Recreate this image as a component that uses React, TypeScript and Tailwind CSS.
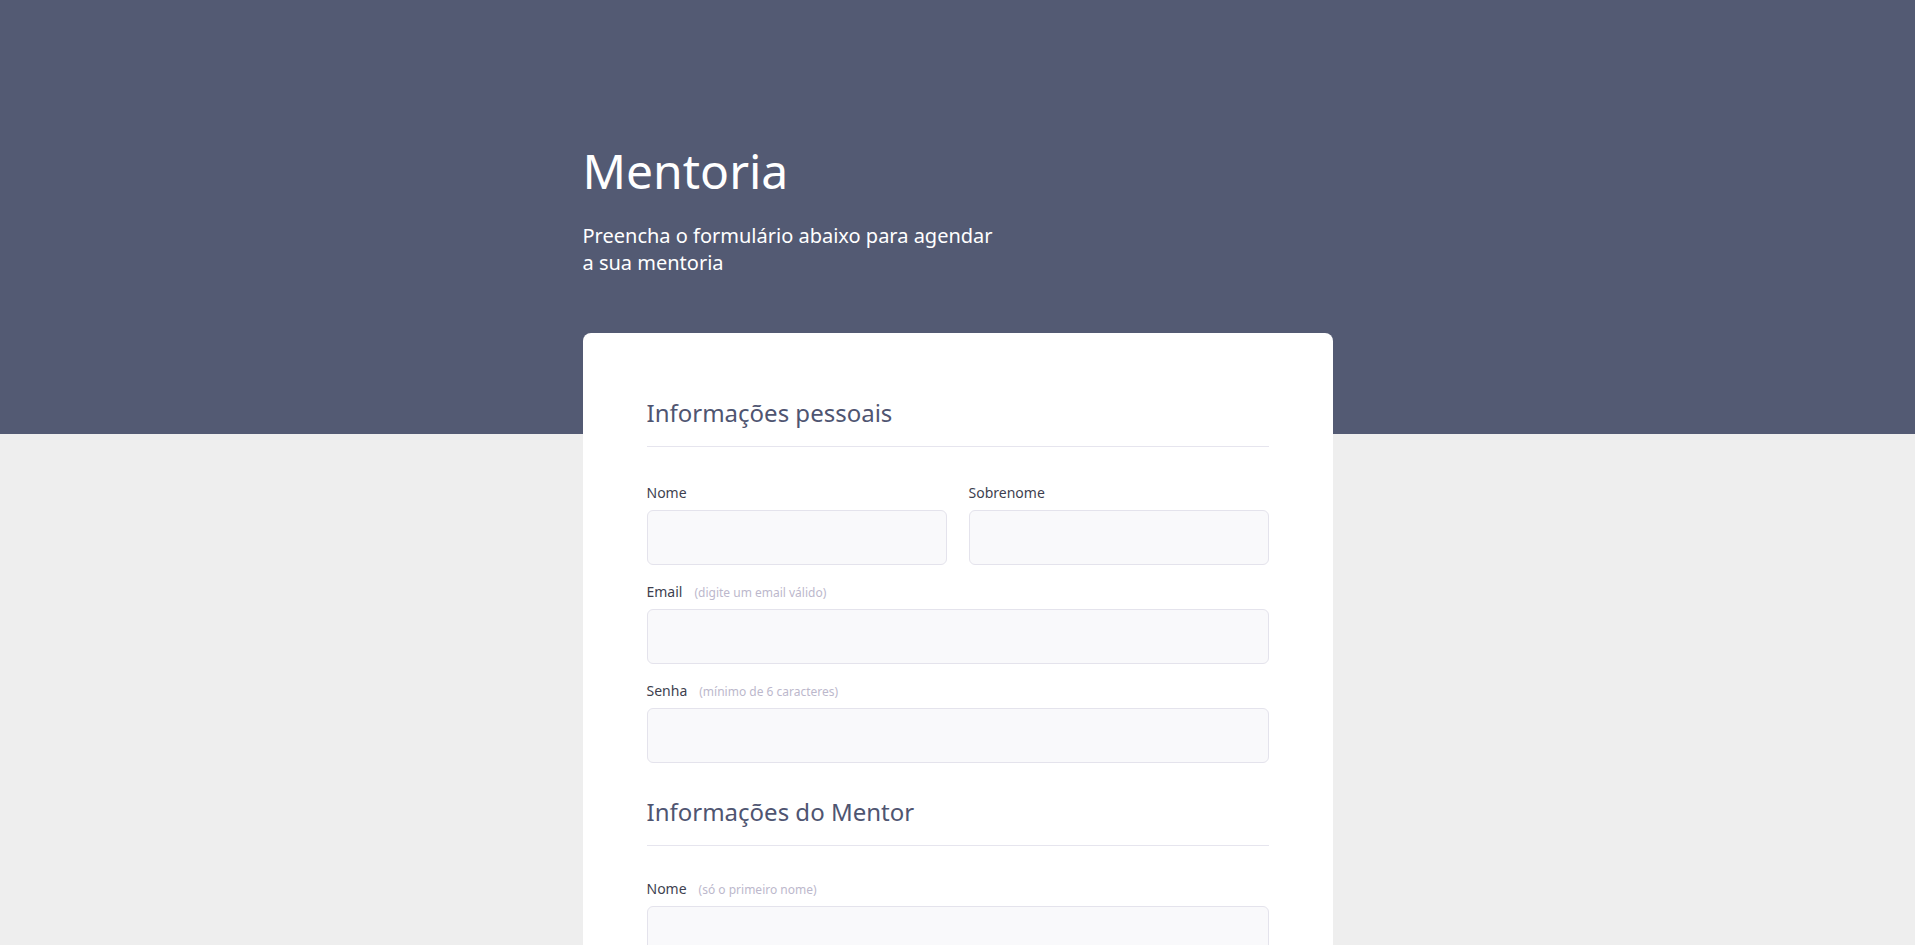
import React from "react";

type FieldProps = {
  label: string;
  hint?: string;
  type?: string;
};

const Field: React.FC<FieldProps> = ({ label, hint, type = "text" }) => (
  <div className="mb-[17px]">
    <div className="flex items-baseline h-[19px]">
      <label className="text-sm leading-[19px] text-[#3e3f4f]">{label}</label>
      {hint && (
        <span className="ml-3 text-xs leading-[19px] text-[#bcb8cc]">
          {hint}
        </span>
      )}
    </div>
    <input
      type={type}
      className="mt-2 block w-full h-[55px] rounded-md border border-[#e4e3ec] bg-[#f9f9fb] px-4 text-base text-[#3e3f4f] outline-none"
    />
  </div>
);

const SectionTitle: React.FC<{ children: React.ReactNode; className?: string }> = ({
  children,
  className = "",
}) => (
  <h2
    className={`text-2xl leading-8 text-[#4f5571] pb-[17px] border-b border-[#e6e5ee] ${className}`}
  >
    {children}
  </h2>
);

export default function App() {
  return (
    <div className="min-h-screen bg-[#eeeeee] font-['Noto_Sans',sans-serif]">
      {/* Header */}
      <div className="bg-[#535a73] pt-[147px] pb-[158px]">
        <div className="mx-auto w-[750px]">
          <h1 className="text-5xl leading-[48px] text-white">Mentoria</h1>
          <p className="mt-[27px] w-[415px] text-xl leading-[27px] text-white">
            Preencha o formulário abaixo para agendar a sua mentoria
          </p>
        </div>
      </div>

      {/* Form card */}
      <div className="mx-auto w-[750px] -mt-[101px] pb-20">
        <form className="flex flex-col bg-white rounded-lg px-16 pt-16 pb-16">
          <SectionTitle>Informações pessoais</SectionTitle>
          <div className="mt-9">
            <div className="grid grid-cols-2 gap-x-[22px]">
              <Field label="Nome" />
              <Field label="Sobrenome" />
            </div>
            <Field label="Email" hint="(digite um email válido)" type="email" />
            <Field label="Senha" hint="(mínimo de 6 caracteres)" type="password" />
          </div>

          <SectionTitle className="mt-4">Informações do Mentor</SectionTitle>
          <div className="mt-[33px]">
            <Field label="Nome" hint="(só o primeiro nome)" />
            <Field label="Área de atuação" />
            <Field label="Data" hint="(dd/mm/aaaa)" />
          </div>

          <button
            type="button"
            className="mt-6 w-full h-[55px] rounded-md bg-[#535a73] text-white text-base"
          >
            Agendar mentoria
          </button>
        </form>
      </div>
    </div>
  );
}
